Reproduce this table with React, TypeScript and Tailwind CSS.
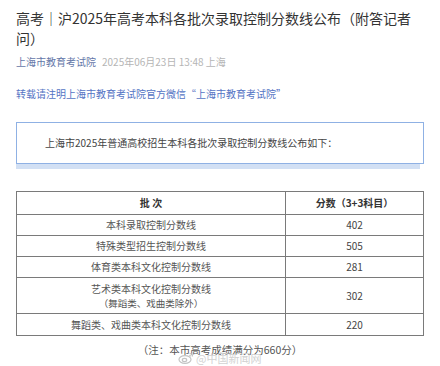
import React from 'react';

const rows = [
  { name: '本科录取控制分数线', score: '402', h: 'h-[21px]' },
  { name: '特殊类型招生控制分数线', score: '505', h: 'h-[21px]' },
  { name: '体育类本科文化控制分数线', score: '281', h: 'h-[21px]' },
];

function WeiboMark() {
  return (
    <svg width="16" height="12" viewBox="0 0 16 12" fill="none" stroke="#c4c4c4" strokeWidth="1.2">
      <ellipse cx="7" cy="7.5" rx="6" ry="3.8" />
      <ellipse cx="6.5" cy="8" rx="2.2" ry="1.6" />
      <path d="M11.5 1.5a3 3 0 0 1 3 3" />
      <path d="M11.3 3.3a1.3 1.3 0 0 1 1.3 1.3" />
    </svg>
  );
}

export default function App() {
  const font = { fontFamily: '"Noto Sans CJK SC", "Noto Sans", sans-serif' };
  return (
    <div className="relative w-[440px] h-[366px] overflow-hidden bg-white px-4 pt-[8px]" style={font}>
      {/* title */}
      <h1 className="text-[14px] leading-[20px] text-[#333] font-normal">
        高考｜沪2025年高考本科各批次录取控制分数线公布（附答记者问）
      </h1>
      <div className="mt-[7px] flex items-center gap-[6px] text-[10px] leading-[14px]">
        <span className="text-[#6477a8]">上海市教育考试院</span>
        <span className="text-[#b5b5b5]">2025年06月23日 13:48 上海</span>
      </div>
      <div className="mt-[18px] text-[10px] leading-[14px] text-[#5574c4]">
        转载请注明上海市教育考试院官方微信“上海市教育考试院”
      </div>

      {/* notice box */}
      <div className="mt-[21px] border border-[#8fb1e4] py-[13px] pl-[28px] text-[10px] leading-[14px] text-[#444] shadow-[-2px_7px_0_-2px_#d2e0f4]">
        上海市2025年普通高校招生本科各批次录取控制分数线公布如下：
      </div>

      {/* table */}
      <table className="mt-[27px] w-full border-collapse text-[10px] leading-[14px] text-[#555]">
        <tbody>
          <tr className="h-[23px]">
            <td className="w-[269px] border border-[#7a7a7a] text-center font-bold text-[#333]">批 次</td>
            <td className="border border-[#7a7a7a] text-center font-bold text-[#333]">分数（3+3科目）</td>
          </tr>
          {rows.map((r) => (
            <tr key={r.name} className={r.h}>
              <td className="border border-[#7a7a7a] text-center">{r.name}</td>
              <td className="border border-[#7a7a7a] text-center text-[#444]">{r.score}</td>
            </tr>
          ))}
          <tr className="h-[36px]">
            <td className="border border-[#7a7a7a] text-center">
              <div className="leading-[15px]">艺术类本科文化控制分数线</div>
              <div className="text-[9.5px] leading-[15px]">（舞蹈类、戏曲类除外）</div>
            </td>
            <td className="border border-[#7a7a7a] text-center text-[#444]">302</td>
          </tr>
          <tr className="h-[22px]">
            <td className="border border-[#7a7a7a] text-center">舞蹈类、戏曲类本科文化控制分数线</td>
            <td className="border border-[#7a7a7a] text-center text-[#444]">220</td>
          </tr>
        </tbody>
      </table>

      <div className="mt-[7px] text-center text-[10.5px] leading-[14px] text-[#555]">
        （注：本市高考成绩满分为660分）
      </div>

      {/* watermark */}
      <div className="absolute left-[178px] top-[352px] flex items-center gap-[2px] text-[11px] leading-[12px] text-[#d2d2d2]">
        <WeiboMark />
        <span>@中国新闻网</span>
      </div>
    </div>
  );
}
